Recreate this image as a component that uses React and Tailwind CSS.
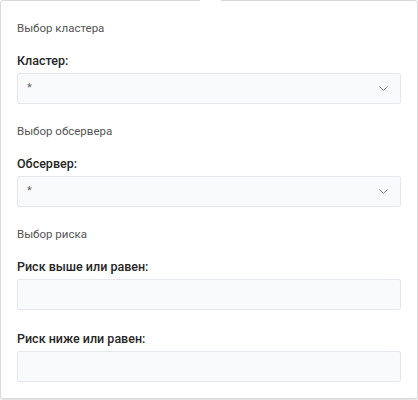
import { ChevronDown } from "lucide-react";

const Section = ({ title, children }) => (
    <div className="flex flex-col">
        <div className="text-[11.5px] leading-[18px] text-[#555] mb-[15px]">{title}</div>
        {children}
    </div>
);

const Label = ({ children }) => (
    <div className="text-[12.5px] leading-[18px] font-medium text-[#262626] mb-[3px]">{children}</div>
);

const SelectBox = ({ value }) => (
    <div className="h-[31px] flex items-center justify-between border border-[#e4e7ed] bg-[#f9fafc] rounded-[2px] pl-[9px] pr-[9px]">
        <span className="text-[11px] text-[#666]">{value}</span>
        <ChevronDown size={15} strokeWidth={1.2} className="text-[#555]" />
    </div>
);

const InputBox = () => (
    <div className="h-[31px] border border-[#e4e7ed] bg-[#f9fafc] rounded-[2px]" />
);

const App = () => {
    return (
        <div className="w-[418px] h-[400px] bg-white font-['Roboto',sans-serif]">
            <div className="relative w-[418px] h-[399px] border border-[#d9d9d9] rounded-[3px] shadow-[0_1px_2px_rgba(0,0,0,0.15)] px-4 pt-[18px]">
                <div className="absolute top-[-1px] left-[199px] w-[21px] h-[2px] bg-white" />

                <Section title="Выбор кластера">
                    <Label>Кластер:</Label>
                    <SelectBox value="*" />
                </Section>

                <div className="mt-[18px]">
                    <Section title="Выбор обсервера">
                        <Label>Обсервер:</Label>
                        <SelectBox value="*" />
                    </Section>
                </div>

                <div className="mt-[18px]">
                    <Section title="Выбор риска">
                        <Label>Риск выше или равен:</Label>
                        <InputBox />
                        <div className="mt-[20px]">
                            <Label>Риск ниже или равен:</Label>
                            <InputBox />
                        </div>
                    </Section>
                </div>
            </div>
        </div>
    );
};

export default App;
